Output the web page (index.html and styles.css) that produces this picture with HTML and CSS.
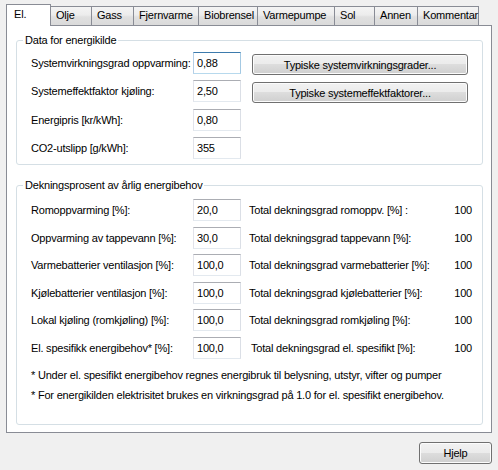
FILE: index.html
```html
<!DOCTYPE html>
<html lang="no">
<head>
    <meta charset="UTF-8">
    <title>El.</title>
    <link rel="stylesheet" href="styles.css">
</head>
<body>

<div class="dialog">
    <div class="tabs">
        <div class="tab active">El.</div>
        <div class="tab">Olje</div>
        <div class="tab">Gass</div>
        <div class="tab">Fjernvarme</div>
        <div class="tab">Biobrensel</div>
        <div class="tab">Varmepumpe</div>
        <div class="tab">Sol</div>
        <div class="tab">Annen</div>
        <div class="tab">Kommentar</div>
    </div>

    <div class="panel">
        <fieldset class="group source">
            <legend>Data for energikilde</legend>
            <div class="row">
                <span class="label">Systemvirkningsgrad oppvarming:</span>
                <input class="field focused" type="text" value="0,88">
                <button class="btn wide">Typiske systemvirkningsgrader...</button>
            </div>
            <div class="row">
                <span class="label">Systemeffektfaktor kjøling:</span>
                <input class="field" type="text" value="2,50">
                <button class="btn wide">Typiske systemeffektfaktorer...</button>
            </div>
            <div class="row">
                <span class="label">Energipris [kr/kWh]:</span>
                <input class="field" type="text" value="0,80">
            </div>
            <div class="row">
                <span class="label">CO2-utslipp [g/kWh]:</span>
                <input class="field" type="text" value="355">
            </div>
        </fieldset>

        <fieldset class="group cover">
            <legend>Dekningsprosent av årlig energibehov</legend>
            <div class="row">
                <span class="label">Romoppvarming [%]:</span>
                <input class="field" type="text" value="20,0">
                <span class="total">Total dekningsgrad romoppv. [%] :</span>
                <span class="value">100</span>
            </div>
            <div class="row">
                <span class="label">Oppvarming av tappevann [%]:</span>
                <input class="field" type="text" value="30,0">
                <span class="total">Total dekningsgrad tappevann [%]:</span>
                <span class="value">100</span>
            </div>
            <div class="row">
                <span class="label">Varmebatterier ventilasjon [%]:</span>
                <input class="field" type="text" value="100,0">
                <span class="total">Total dekningsgrad varmebatterier [%]:</span>
                <span class="value">100</span>
            </div>
            <div class="row">
                <span class="label">Kjølebatterier ventilasjon [%]:</span>
                <input class="field" type="text" value="100,0">
                <span class="total">Total dekningsgrad kjølebatterier [%]:</span>
                <span class="value">100</span>
            </div>
            <div class="row">
                <span class="label">Lokal kjøling (romkjøling) [%]:</span>
                <input class="field" type="text" value="100,0">
                <span class="total">Total dekningsgrad romkjøling [%]:</span>
                <span class="value">100</span>
            </div>
            <div class="row">
                <span class="label">El. spesifikk energibehov* [%]:</span>
                <input class="field" type="text" value="100,0">
                <span class="total shifted">Total dekningsgrad el. spesifikt [%]:</span>
                <span class="value">100</span>
            </div>
            <p class="note">* Under el. spesifikt energibehov regnes energibruk til belysning, utstyr, vifter og pumper</p>
            <p class="note">* For energikilden elektrisitet brukes en virkningsgrad på 1.0 for el. spesifikt energibehov.</p>
        </fieldset>
    </div>

    <div class="footer">
        <button class="btn help">Hjelp</button>
    </div>
</div>

</body>
</html>
```

FILE: styles.css
```css
* {
    box-sizing: border-box;
}
body {
    margin: 0;
    background-color: #f0f0f0;
    font-family: 'Liberation Sans', Arial, sans-serif;
    font-size: 11px;
    letter-spacing: -0.2px;
    color: #000;
}
.dialog {
    width: 486px;
    margin-left: 6px;
}

/* tab strip */
.tabs {
    display: flex;
    align-items: flex-end;
    height: 25px;
    padding-top: 4px;
}
.tab {
    height: 19px;
    margin-left: -1px;
    padding: 2px 0 0 5px;
    border: 1px solid #898c95;
    border-bottom: none;
    background: linear-gradient(#f4f4f4, #ececec 45%, #e0e0e0 55%, #dadada);
    white-space: nowrap;
}
.tab:nth-child(1) { width: 45px; margin-left: 0; }
.tab:nth-child(2) { width: 42px; }
.tab:nth-child(3) { width: 43px; }
.tab:nth-child(4) { width: 66px; }
.tab:nth-child(5) { width: 60px; }
.tab:nth-child(6) { width: 78px; }
.tab:nth-child(7) { width: 41px; }
.tab:nth-child(8) { width: 44px; }
.tab:nth-child(9) { width: 62px; }
.tab.active {
    position: relative;
    z-index: 1;
    height: 22px;
    margin-bottom: -1px;
    padding: 3px 0 0 7px;
    background: #fff;
}

.panel {
    height: 408px;
    border: 1px solid #898c95;
    background-color: #fff;
    padding: 0 8px 0 9px;
}

/* group boxes */
.group {
    margin: 7px 0 0 0;
    padding: 2px 0 2px 0;
    border: 1px solid #d5dfe5;
    border-radius: 3px;
    min-width: 0;
}
.group legend {
    margin-left: 6px;
    padding: 0 2px;
    line-height: 14px;
}
.group.cover {
    margin-top: 13px;
    padding: 4px 0 19px 0;
}
.row {
    display: flex;
    align-items: center;
    height: 28.3px;
    padding: 0 10px 0 14px;
}
.cover .row {
    height: 27.6px;
}
.label {
    width: 162px;
    white-space: nowrap;
}
.field {
    width: 48px;
    height: 22px;
    padding: 0 3px;
    font: inherit;
    letter-spacing: inherit;
    color: #000;
    border: 1px solid;
    border-color: #abadb3 #dbdfe6 #e3e9ef #e2e3ea;
    outline: none;
}
.field.focused {
    border-color: #3d7bad #a4c9e3 #b7d9ed #b5cfe7;
}
.total {
    flex: 1;
    margin-left: 8px;
    white-space: nowrap;
}
.total.shifted {
    margin-left: 10px;
}
.value {
    text-align: right;
}
.note {
    margin: 3px 0 0 14px;
    line-height: 20px;
    white-space: nowrap;
}
.note + .note {
    margin-top: 0;
}

/* buttons */
.btn {
    height: 21px;
    padding: 0;
    font: inherit;
    letter-spacing: inherit;
    color: #000;
    border: 1px solid #707070;
    border-radius: 3px;
    background: linear-gradient(#f2f2f2, #ebebeb 50%, #dddddd 50%, #cfcfcf);
    box-shadow: inset 0 0 0 1px #fcfcfc;
}
.btn.wide {
    width: 216px;
    margin: 3px 0 0 11px;
}
.footer {
    display: flex;
    justify-content: flex-end;
    padding-top: 9px;
}
.btn.help {
    width: 73px;
    height: 22px;
}
```
